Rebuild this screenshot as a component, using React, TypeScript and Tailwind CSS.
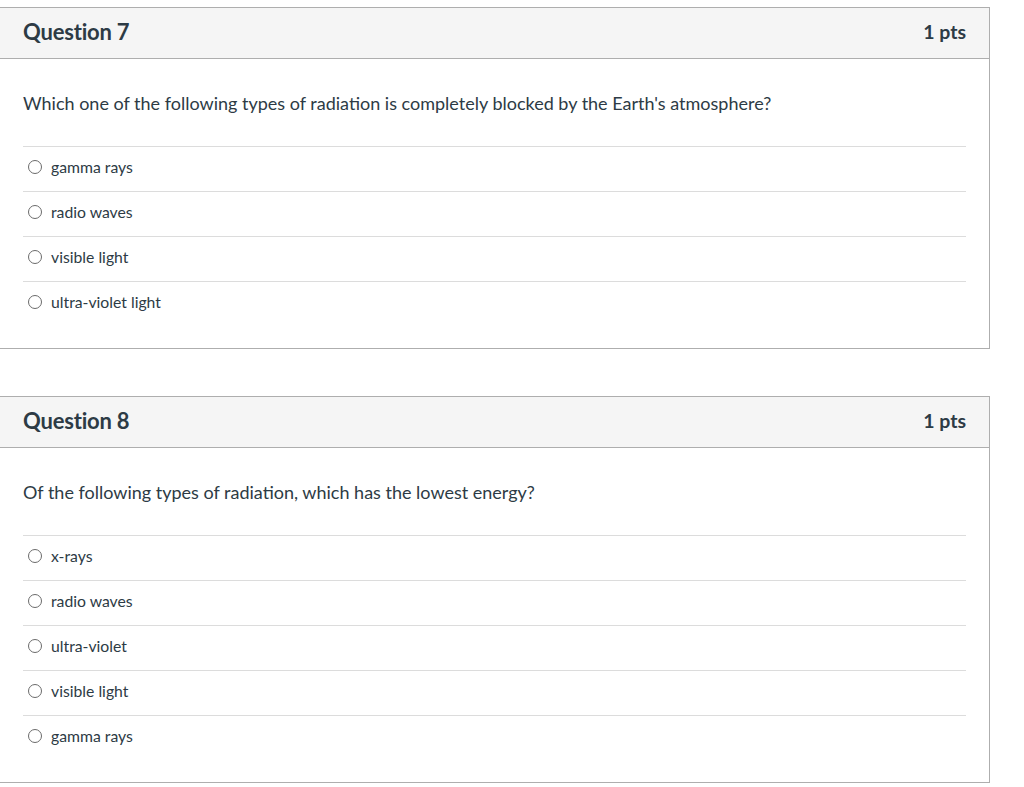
const QUESTIONS = [
  {
    n: 7,
    pts: "1 pts",
    text: "Which one of the following types of radiation is completely blocked by the Earth's atmosphere?",
    answers: ["gamma rays", "radio waves", "visible light", "ultra-violet light"],
  },
  {
    n: 8,
    pts: "1 pts",
    text: "Of the following types of radiation, which has the lowest energy?",
    answers: ["x-rays", "radio waves", "ultra-violet", "visible light", "gamma rays"],
  },
];

function Radio() {
  return (
    <span className="mr-[9px] inline-block h-[14px] w-[14px] shrink-0 rounded-full border-[1.5px] border-[#6b6b6b] bg-white" />
  );
}

function QuestionCard({ q }: { q: (typeof QUESTIONS)[number] }) {
  return (
    <div className="ml-[-1px] w-[991px] border border-[#aeaeae] bg-white">
      <div className="flex h-[51px] items-center justify-between border-b border-[#aeaeae] bg-[#f5f5f5] px-[23px]">
        <h2 className="pb-[3px] text-[22px] font-bold tracking-[-0.2px] text-[#2d3b45]">
          Question {q.n}
        </h2>
        <span className="pb-[2px] text-[19.5px] font-bold text-[#2d3b45]">{q.pts}</span>
      </div>
      <div className="px-[23px] pb-[22px]">
        <p className="pt-[32px] pb-[31px] text-[18px] leading-[24px] text-[#2d3b45]">
          {q.text}
        </p>
        <div>
          {q.answers.map((a) => (
            <div
              key={a}
              className="flex h-[45px] items-center border-t border-[#dcdcdc] pb-[4px] pl-[5px] text-[15.75px] text-[#2d3b45]"
            >
              <Radio />
              {a}
            </div>
          ))}
        </div>
      </div>
    </div>
  );
}

export default function App() {
  return (
    <div
      className="min-h-[787px] bg-white pt-[7px]"
      style={{ fontFamily: "Lato, 'Liberation Sans', sans-serif" }}
    >
      <div className="flex flex-col gap-[47px]">
        {QUESTIONS.map((q) => (
          <QuestionCard key={q.n} q={q} />
        ))}
      </div>
    </div>
  );
}
